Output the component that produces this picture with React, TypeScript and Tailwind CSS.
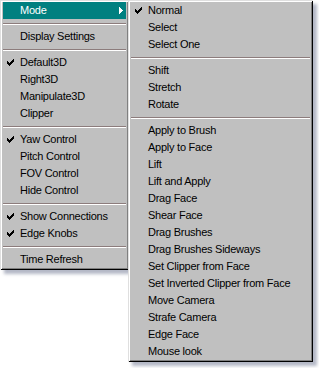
import React from "react";

type Item = { label: string; checked?: boolean; active?: boolean; sub?: boolean } | "-";

const mainItems: Item[] = [
  { label: "Mode", active: true, sub: true },
  "-",
  { label: "Display Settings" },
  "-",
  { label: "Default3D", checked: true },
  { label: "Right3D" },
  { label: "Manipulate3D" },
  { label: "Clipper" },
  "-",
  { label: "Yaw Control", checked: true },
  { label: "Pitch Control" },
  { label: "FOV Control" },
  { label: "Hide Control" },
  "-",
  { label: "Show Connections", checked: true },
  { label: "Edge Knobs", checked: true },
  "-",
  { label: "Time Refresh" },
];

const modeItems: Item[] = [
  { label: "Normal", checked: true },
  { label: "Select" },
  { label: "Select One" },
  "-",
  { label: "Shift" },
  { label: "Stretch" },
  { label: "Rotate" },
  "-",
  { label: "Apply to Brush" },
  { label: "Apply to Face" },
  { label: "Lift" },
  { label: "Lift and Apply" },
  { label: "Drag Face" },
  { label: "Shear Face" },
  { label: "Drag Brushes" },
  { label: "Drag Brushes Sideways" },
  { label: "Set Clipper from Face" },
  { label: "Set Inverted Clipper from Face" },
  { label: "Move Camera" },
  { label: "Strafe Camera" },
  { label: "Edge Face" },
  { label: "Mouse look" },
];

// 7x7 win98 style check mark
const checkPixels = [
  "......X",
  ".....XX",
  "X...XXX",
  "XX.XXX.",
  "XXXXX..",
  ".XXX...",
  "..X....",
];

const Check = ({ color }: { color: string }) => (
  <svg width="7" height="7" viewBox="0 0 7 7" shapeRendering="crispEdges">
    {checkPixels.flatMap((row, y) =>
      row.split("").map((c, x) => (c === "X" ? <rect key={`${x}-${y}`} x={x} y={y} width="1" height="1" fill={color} /> : null))
    )}
  </svg>
);

const Menu = ({ items, className }: { items: Item[]; className: string }) => (
  <div
    className={`bg-[#c0c0c0] px-[3px] py-[2px] shadow-[inset_1px_1px_0_#dfdfdf,inset_-1px_-1px_0_#000,inset_2px_2px_0_#fff,inset_-2px_-2px_0_#808080,4px_4px_3px_rgba(70,80,115,0.4)] ${className}`}
  >
    {items.map((it, i) =>
      it === "-" ? (
        <div key={i} className="h-[9px] pt-[4px]">
          <div className="h-px bg-[#8c7c7c]" />
          <div className="h-px bg-white" />
        </div>
      ) : (
        <div
          key={i}
          className={`relative flex h-[17px] items-center pl-[17px] pr-[3px] ${it.active ? "bg-[#008080] text-white" : "text-black"}`}
        >
          {it.checked && (
            <span className="absolute left-[4px] top-[5px] flex">
              <Check color={it.active ? "#fff" : "#000"} />
            </span>
          )}
          <span className="flex-1 whitespace-nowrap">{it.label}</span>
          {it.sub && (
            <svg width="4" height="7" viewBox="0 0 4 7" shapeRendering="crispEdges">
              <path d="M0 0h1v7H0zM1 1h1v5H1zM2 2h1v3H2zM3 3h1v1H3z" fill="#fff" />
            </svg>
          )}
        </div>
      )
    )}
  </div>
);

export default function App() {
  return (
    <div
      className="relative h-[368px] w-[319px] overflow-hidden bg-white text-[11px] leading-none tracking-[-0.25px]"
      style={{ fontFamily: '"Liberation Sans", Arial, sans-serif' }}
    >
      <Menu items={mainItems} className="w-[129px]" />
      <Menu items={modeItems} className="absolute left-[128px] top-0 w-[185px]" />
    </div>
  );
}
